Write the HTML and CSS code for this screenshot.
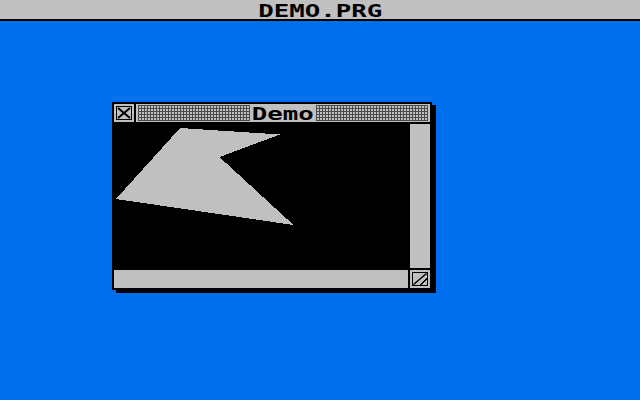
FILE: index.html
```html
<!DOCTYPE html>
<html>
<head>
<meta charset="utf-8">
<link rel="stylesheet" href="styles.css">
</head>
<body>
<div class="menubar"><span class="pix">DEMO.PRG</span></div>
<div class="desktop">
  <div class="window">
    <div class="titlebar">
      <div class="closebox">
        <svg width="20" height="18" viewBox="0 0 20 18" shape-rendering="crispEdges">
          <rect x="2.5" y="2.5" width="15" height="13" fill="none" stroke="#000" stroke-width="1"/>
          <path d="M4 4 L16 14 M16 4 L4 14" stroke="#000" stroke-width="2" fill="none" shape-rendering="auto"/>
        </svg>
      </div>
      <div class="title">
        <div class="dots"></div>
        <div class="name"><span class="pix">Demo</span></div>
        <div class="dots"></div>
      </div>
    </div>
    <div class="middle">
      <div class="work">
        <svg width="294" height="144" viewBox="0 0 294 144" shape-rendering="crispEdges">
          <polygon points="66,4 166,10.5 105.5,33 179.5,101 2,75" fill="#c0c0c0"/>
        </svg>
      </div>
      <div class="vscroll"></div>
    </div>
    <div class="bottom">
      <div class="hscroll"></div>
      <div class="sizebox">
        <svg width="20" height="18" viewBox="0 0 20 18" shape-rendering="crispEdges">
          <rect x="2" y="2" width="16" height="14" fill="#000"/>
          <rect x="3" y="3" width="14" height="12" fill="#c0c0c0"/>
          <path d="M3.5 14.5 L16.5 3.5" stroke="#000" stroke-width="1.5" fill="none" shape-rendering="auto"/>
          <polygon points="9,15 17,8 17,15" fill="#000"/>
          <polygon points="11,15 17,10 17,15" fill="#c0c0c0"/>
        </svg>
      </div>
    </div>
  </div>
</div>
</body>
</html>
```

FILE: styles.css
```css
html, body {
  margin: 0;
  padding: 0;
}
body {
  width: 640px;
  height: 400px;
  background: #006fee;
  overflow: hidden;
  position: relative;
  font-family: "DejaVu Sans Mono", "Liberation Mono", monospace;
  font-weight: bold;
  font-size: 18px;
}
.pix {
  display: inline-block;
  transform: scaleX(1.43);
  transform-origin: center;
  color: #000;
}
.menubar {
  height: 19px;
  background: #c0c0c0;
  border-bottom: 2px solid #000;
  text-align: center;
  line-height: 21px;
}
.desktop {
  position: relative;
  height: 379px;
}
.window {
  position: absolute;
  left: 112px;
  top: 81px;
  width: 320px;
  height: 188px;
  box-sizing: border-box;
  border: 2px solid #000;
  background: #000;
  box-shadow: 4px 3px 0 #000;
  display: flex;
  flex-direction: column;
  gap: 2px;
}
.titlebar {
  height: 18px;
  display: flex;
  gap: 2px;
}
.closebox {
  width: 20px;
  height: 18px;
  background: #c0c0c0;
}
.closebox svg, .sizebox svg {
  display: block;
}
.title {
  flex: 1;
  background: #c0c0c0;
  display: flex;
  padding: 1px 2px;
}
.dots {
  flex: 1;
  background-color: #c0c0c0;
  background-image:
    linear-gradient(90deg, #4a4a4a 1px, transparent 1px),
    linear-gradient(#4a4a4a 1px, transparent 1px);
  background-size: 3px 3px;
}
.name {
  width: 66px;
  text-align: center;
  line-height: 17px;
  overflow: visible;
}
.middle {
  height: 144px;
  display: flex;
  gap: 2px;
}
.work {
  flex: 1;
  background: #000;
}
.work svg {
  display: block;
}
.vscroll {
  width: 20px;
  background: #c0c0c0;
}
.bottom {
  height: 18px;
  display: flex;
  gap: 2px;
}
.hscroll {
  flex: 1;
  background: #c0c0c0;
}
.sizebox {
  width: 20px;
  background: #c0c0c0;
}
```
